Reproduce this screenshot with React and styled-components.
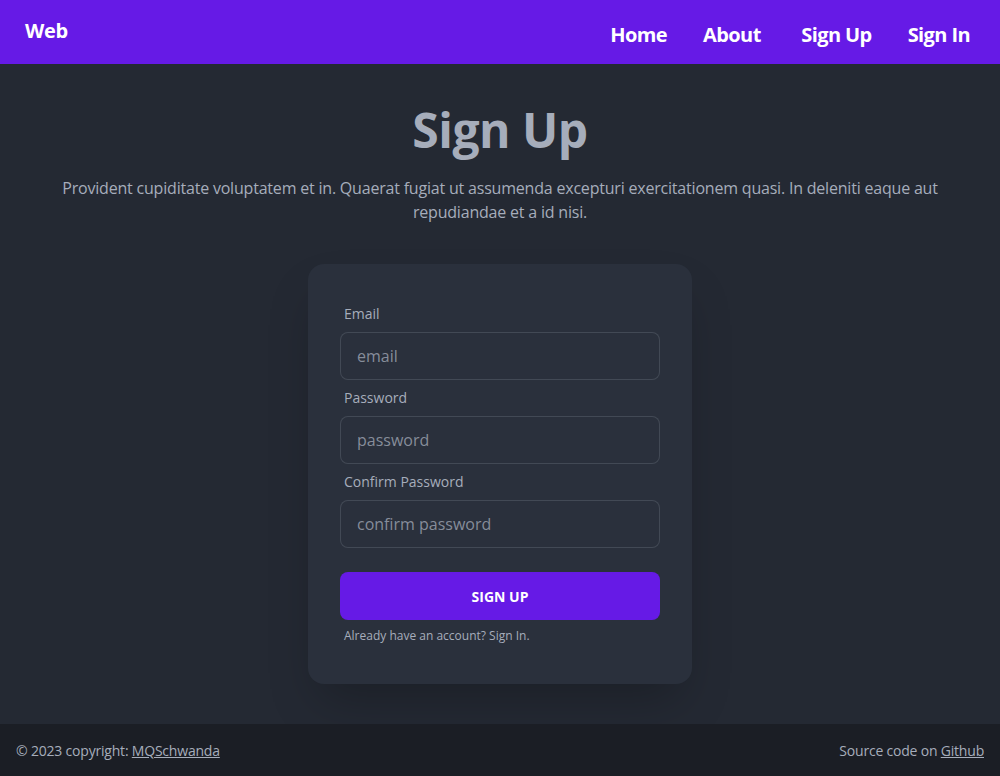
import React from "react";
import styled, { createGlobalStyle } from "styled-components";

const GlobalStyle = createGlobalStyle`
  * {
    box-sizing: border-box;
  }
  body {
    margin: 0;
    background-color: #242933;
    font-family: "Open Sans", "Noto Sans", sans-serif;
    color: #a6adbb;
  }
`;

const Page = styled.div`
  display: flex;
  flex-direction: column;
  min-height: 100vh;
`;

const Navbar = styled.nav`
  height: 64px;
  display: flex;
  align-items: center;
  justify-content: space-between;
  padding: 0 30px 0 25px;
  background-color: #661ae6;
`;

const Brand = styled.a`
  color: #fff;
  font-size: 20px;
  font-weight: 700;
  letter-spacing: -0.3px;
  text-decoration: none;
  margin-top: -3px;
`;

const NavLinks = styled.ul`
  display: flex;
  align-items: center;
  gap: 36px;
  margin: 0;
  padding: 0;
  list-style: none;
  margin-top: 4px;
`;

const NavLink = styled.a`
  color: #fff;
  font-size: 20px;
  font-weight: 700;
  letter-spacing: -0.6px;
  text-decoration: none;
  white-space: pre;
`;

const Main = styled.main`
  flex: 1;
  display: flex;
  flex-direction: column;
  align-items: center;
  padding: 38px 40px 40px;
`;

const Title = styled.h1`
  margin: 0;
  font-size: 48px;
  line-height: 56px;
  font-weight: 700;
  letter-spacing: -0.5px;
  color: #a6adbb;
`;

const Intro = styled.p`
  margin: 18px 0 40px;
  max-width: 900px;
  font-size: 16px;
  line-height: 24px;
  letter-spacing: -0.2px;
  text-align: center;
`;

const Card = styled.div`
  width: 384px;
  padding: 32px;
  border-radius: 16px;
  background-color: #2a303c;
  box-shadow: 0 25px 50px -12px rgba(0, 0, 0, 0.25);
`;

const Field = styled.div`
  display: flex;
  flex-direction: column;
`;

const Label = styled.label`
  padding: 8px 4px;
  font-size: ${(p) => (p.$small ? "12px" : "14px")};
  line-height: ${(p) => (p.$small ? "16px" : "20px")};
  color: #a6adbb;
`;

const Input = styled.input`
  height: 48px;
  padding: 0 16px;
  border: 1px solid rgba(166, 173, 187, 0.2);
  border-radius: 8px;
  background-color: #2a303c;
  font-family: inherit;
  font-size: 16px;
  color: #a6adbb;
  outline: none;

  &::placeholder {
    color: rgba(166, 173, 187, 0.75);
  }
`;

const Button = styled.button`
  margin-top: 24px;
  width: 100%;
  height: 48px;
  border: none;
  border-radius: 8px;
  background-color: #661ae6;
  color: #fff;
  font-family: inherit;
  font-size: 14px;
  font-weight: 700;
  text-transform: uppercase;
  cursor: pointer;
`;

const Footer = styled.footer`
  height: 52px;
  display: flex;
  align-items: center;
  justify-content: space-between;
  padding: 0 16px;
  background-color: #1b1e25;
  font-size: 14px;
  letter-spacing: -0.2px;
  color: #a6adbb;

  a {
    color: inherit;
  }
`;

const fields = [
  { label: "Email", type: "email", placeholder: "email" },
  { label: "Password", type: "password", placeholder: "password" },
  { label: "Confirm Password", type: "password", placeholder: "confirm password" },
];

const App = () => {
  return (
    <>
      <GlobalStyle />
      <Page>
        <Navbar>
          <Brand href="#">Web</Brand>
          <NavLinks>
            <li>
              <NavLink href="#">Home</NavLink>
            </li>
            <li>
              <NavLink href="#">About </NavLink>
            </li>
            <li>
              <NavLink href="#">Sign Up</NavLink>
            </li>
            <li>
              <NavLink href="#">Sign In</NavLink>
            </li>
          </NavLinks>
        </Navbar>
        <Main>
          <Title>Sign Up</Title>
          <Intro>
            Provident cupiditate voluptatem et in. Quaerat fugiat ut assumenda
            excepturi exercitationem quasi. In deleniti eaque aut repudiandae et
            a id nisi.
          </Intro>
          <Card>
            {fields.map((f) => (
              <Field key={f.label}>
                <Label>{f.label}</Label>
                <Input type={f.type} placeholder={f.placeholder} />
              </Field>
            ))}
            <Button>Sign Up</Button>
            <Field>
              <Label $small>Already have an account? Sign In.</Label>
            </Field>
          </Card>
        </Main>
        <Footer>
          <span>
            © 2023 copyright: <a href="#">MQSchwanda</a>
          </span>
          <span>
            Source code on <a href="#">Github</a>
          </span>
        </Footer>
      </Page>
    </>
  );
};

export default App;
